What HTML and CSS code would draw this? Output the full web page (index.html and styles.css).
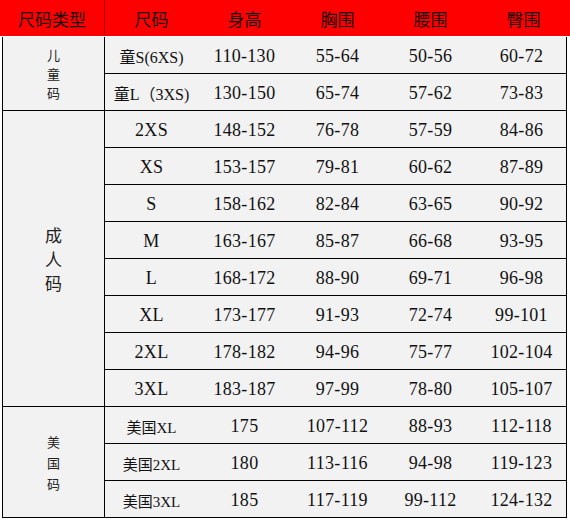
FILE: index.html
```html
<!DOCTYPE html>
<html lang="zh">
<head>
<meta charset="utf-8">
<title>尺码表</title>
<link rel="stylesheet" href="styles.css">
</head>
<body>
<div class="chart">
  <div class="head">
    <div class="hc first">尺码类型</div>
    <div class="hc">尺码</div>
    <div class="hc">身高</div>
    <div class="hc">胸围</div>
    <div class="hc">腰围</div>
    <div class="hc">臀围</div>
  </div>
  <div class="body">
    <div class="group">
      <div class="type kid-type">儿<br>童<br>码</div>
      <div class="rows">
        <div class="row"><span class="size cn">童S(6XS)</span><span>110-130</span><span>55-64</span><span>50-56</span><span>60-72</span></div>
        <div class="row"><span class="size cn">童L（3XS)</span><span>130-150</span><span>65-74</span><span>57-62</span><span>73-83</span></div>
      </div>
    </div>
    <div class="group">
      <div class="type adult-type">成<br>人<br>码</div>
      <div class="rows">
        <div class="row"><span class="size">2XS</span><span>148-152</span><span>76-78</span><span>57-59</span><span>84-86</span></div>
        <div class="row"><span class="size">XS</span><span>153-157</span><span>79-81</span><span>60-62</span><span>87-89</span></div>
        <div class="row"><span class="size">S</span><span>158-162</span><span>82-84</span><span>63-65</span><span>90-92</span></div>
        <div class="row"><span class="size">M</span><span>163-167</span><span>85-87</span><span>66-68</span><span>93-95</span></div>
        <div class="row"><span class="size">L</span><span>168-172</span><span>88-90</span><span>69-71</span><span>96-98</span></div>
        <div class="row"><span class="size">XL</span><span>173-177</span><span>91-93</span><span>72-74</span><span>99-101</span></div>
        <div class="row"><span class="size">2XL</span><span>178-182</span><span>94-96</span><span>75-77</span><span>102-104</span></div>
        <div class="row"><span class="size">3XL</span><span>183-187</span><span>97-99</span><span>78-80</span><span>105-107</span></div>
      </div>
    </div>
    <div class="group">
      <div class="type us-type">美<br>国<br>码</div>
      <div class="rows">
        <div class="row"><span class="size us">美国XL</span><span>175</span><span>107-112</span><span>88-93</span><span>112-118</span></div>
        <div class="row"><span class="size us">美国2XL</span><span>180</span><span>113-116</span><span>94-98</span><span>119-123</span></div>
        <div class="row"><span class="size us">美国3XL</span><span>185</span><span>117-119</span><span>99-112</span><span>124-132</span></div>
      </div>
    </div>
  </div>
</div>
</body>
</html>
```
FILE: styles.css
```css
html, body {
  margin: 0;
  padding: 0;
  background: #ffffff;
}

body {
  font-family: "Liberation Serif", "Noto Sans CJK SC", serif;
  color: #000000;
}

.chart {
  width: 570px;
}

.head {
  display: grid;
  grid-template-columns: 105px 93px 93px 93px 93px 1fr;
  height: 36px;
  background: #ff0000;
  border-bottom: 1px solid #ffffff;
}

.hc {
  display: flex;
  align-items: center;
  justify-content: center;
  font-family: "Noto Sans CJK SC", sans-serif;
  font-size: 17px;
  color: #1a0000;
}

.hc.first {
  border-right: 1px solid #a00000;
}

.body {
  margin-left: 2px;
  width: 563px;
  border: 1px solid #000000;
  border-top: 0;
  background: #f2f2f2;
}

.group {
  display: flex;
  border-bottom: 1px solid #000000;
}

.group:last-child {
  border-bottom: 0;
}

.type {
  width: 101px;
  flex: none;
  border-right: 1px solid #000000;
  display: flex;
  align-items: center;
  justify-content: center;
  text-align: center;
  font-family: "Noto Sans CJK SC", sans-serif;
  color: #222222;
}

.kid-type {
  font-size: 13px;
  line-height: 19px;
}

.adult-type {
  font-size: 17px;
  line-height: 24px;
}

.us-type {
  font-size: 13px;
  line-height: 21px;
}

.rows {
  flex: 1;
}

.row {
  display: grid;
  grid-template-columns: 93px 93px 93px 93px 1fr;
  height: 36px;
  align-items: center;
  text-align: center;
  font-size: 18px;
  letter-spacing: 0.3px;
  color: #111111;
}

.row + .row {
  border-top: 1px solid #000000;
}

.row span {
  padding-top: 2px;
}

.size.cn {
  font-size: 16px;
  letter-spacing: 0;
}

.size.us {
  font-size: 15px;
  letter-spacing: 0;
}
```
